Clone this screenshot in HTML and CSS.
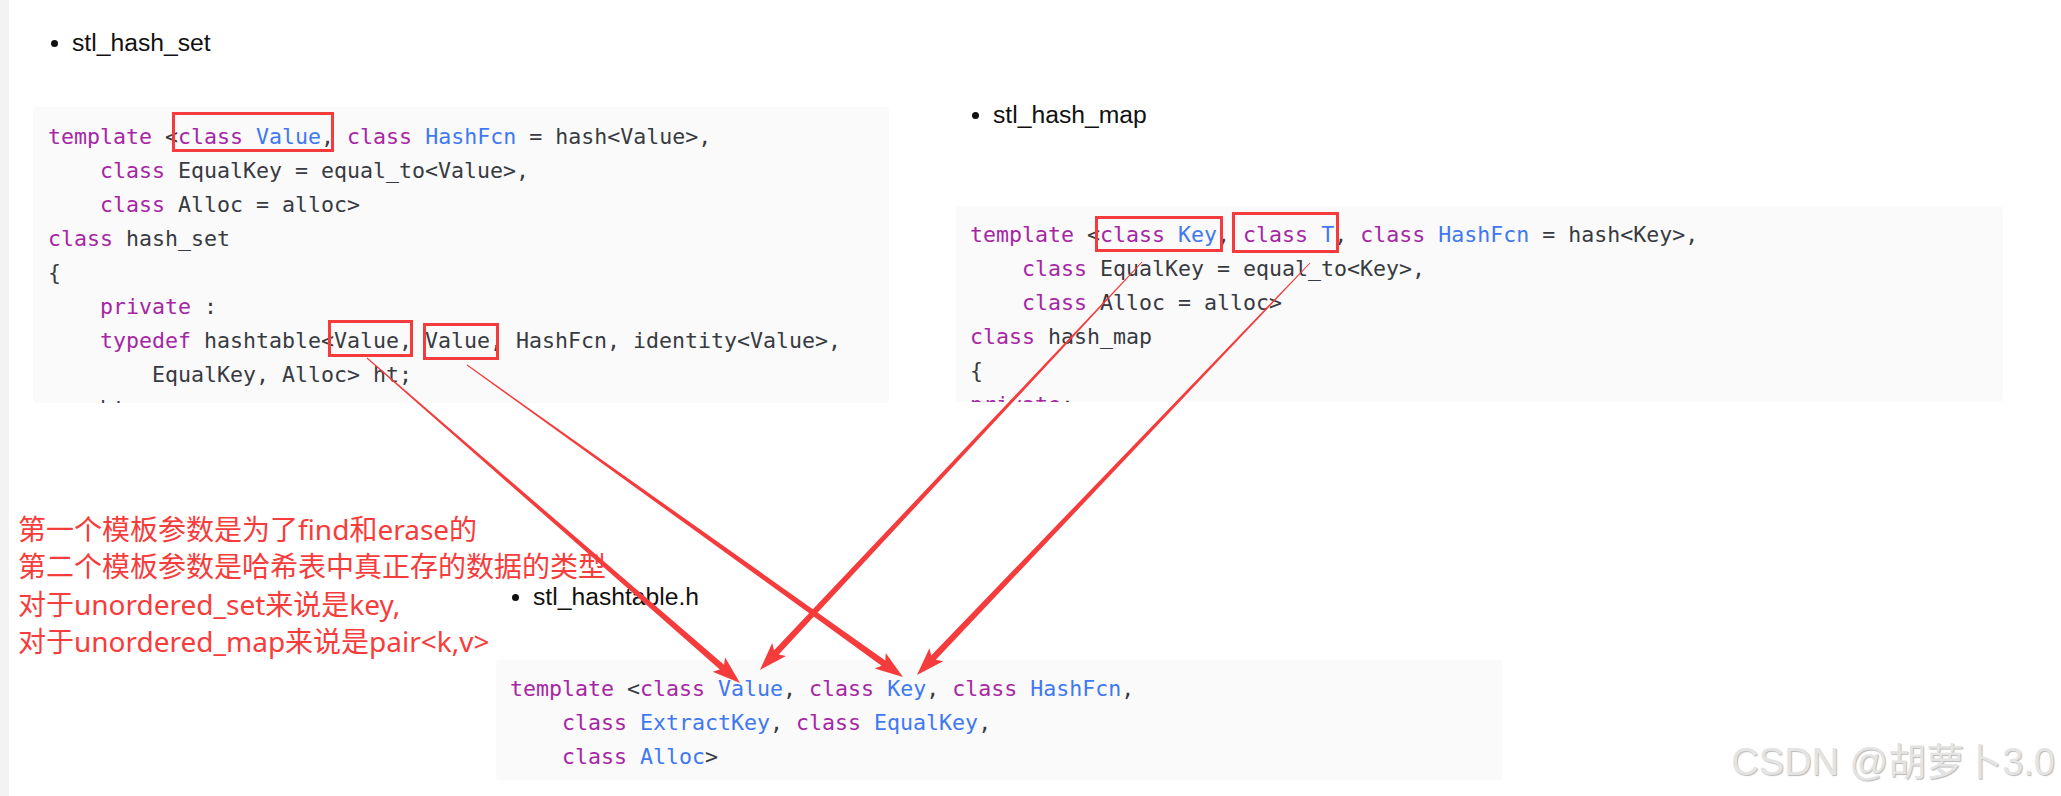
FILE: index.html
```html
<!DOCTYPE html>
<html lang="zh-CN">
<head>
<meta charset="utf-8">
<title>stl hash</title>
<link rel="stylesheet" href="styles.css">
</head>
<body>
<div class="row1">
  <div class="col col1">
    <div class="item"><span class="dot"></span><span>stl_hash_set</span></div>
    <pre class="code code1"><span class="k">template</span> &lt;<span class="k">class</span> <span class="t">Value</span>, <span class="k">class</span> <span class="t">HashFcn</span> = hash&lt;Value&gt;,
    <span class="k">class</span> EqualKey = equal_to&lt;Value&gt;,
    <span class="k">class</span> Alloc = alloc&gt;
<span class="k">class</span> hash_set
{
    <span class="k">private</span> :
    <span class="k">typedef</span> hashtable&lt;Value, Value, HashFcn, identity&lt;Value&gt;,
        EqualKey, Alloc&gt; ht;
    ht rep;</pre>
  </div>
  <div class="col col2">
    <div class="item"><span class="dot"></span><span>stl_hash_map</span></div>
    <pre class="code code2"><span class="k">template</span> &lt;<span class="k">class</span> <span class="t">Key</span>, <span class="k">class</span> <span class="t">T</span>, <span class="k">class</span> <span class="t">HashFcn</span> = hash&lt;Key&gt;,
    <span class="k">class</span> EqualKey = equal_to&lt;Key&gt;,
    <span class="k">class</span> Alloc = alloc&gt;
<span class="k">class</span> hash_map
{
<span class="k">private</span>:</pre>
  </div>
</div>
<div class="sec3">
  <div class="item"><span class="dot"></span><span>stl_hashtable.h</span></div>
  <pre class="code code3"><span class="k">template</span> &lt;<span class="k">class</span> <span class="t">Value</span>, <span class="k">class</span> <span class="t">Key</span>, <span class="k">class</span> <span class="t">HashFcn</span>,
    <span class="k">class</span> <span class="t">ExtractKey</span>, <span class="k">class</span> <span class="t">EqualKey</span>,
    <span class="k">class</span> <span class="t">Alloc</span>&gt;</pre>
</div>

<div class="note">第一个模板参数是为了find和erase的<br>第二个模板参数是哈希表中真正存的数据的类型<br>对于unordered_set来说是key,<br>对于unordered_map来说是pair&lt;k,v&gt;</div>

<svg class="marks" width="2061" height="796" viewBox="0 0 2061 796">
  <g fill="none" stroke="#f53b3b" stroke-width="3">
    <rect x="173.5" y="113.5" width="159" height="37"/>
    <rect x="329.5" y="321.5" width="82" height="34"/>
    <rect x="424.5" y="324.5" width="73" height="34"/>
    <rect x="1096.5" y="217.5" width="125" height="33"/>
    <rect x="1233.5" y="213.5" width="104" height="38"/>
  </g>
  <g fill="#f53b3b">
    <polygon transform="translate(367 358) rotate(41.06)" points="0,-0.5 470.7,-3.2 466.7,-9.5 494.7,0 466.7,9.5 470.7,3.2 0,0.5"/>
    <polygon transform="translate(467 365) rotate(35.59)" points="0,-0.5 512.1,-3.2 508.1,-9.5 536.1,0 508.1,9.5 512.1,3.2 0,0.5"/>
    <polygon transform="translate(1142 262) rotate(133.12)" points="0,-0.5 534.9,-3.2 530.9,-9.5 558.9,0 530.9,9.5 534.9,3.2 0,0.5"/>
    <polygon transform="translate(1310 263) rotate(133.65)" points="0,-0.5 545.4,-3.2 541.4,-9.5 569.4,0 541.4,9.5 545.4,3.2 0,0.5"/>
  </g>
</svg>

<div class="watermark">CSDN @胡萝卜3.0</div>
</body>
</html>
```
FILE: styles.css
```css
* { box-sizing: border-box; }

html, body {
  margin: 0;
  padding: 0;
}

body {
  position: relative;
  width: 2061px;
  height: 796px;
  overflow: hidden;
  background: linear-gradient(to right, #f3f3f3 0, #f3f3f3 9px, #ffffff 9px);
  font-family: "Liberation Sans", Arial, sans-serif;
  color: #111;
}

.row1 {
  display: flex;
  align-items: flex-start;
}

.col1 {
  margin-left: 33px;
  width: 856px;
}

.col2 {
  margin-left: 67px;
  width: 1047px;
}

.item {
  display: flex;
  align-items: center;
  gap: 14px;
  height: 36px;
  font-size: 24.7px;
  line-height: 36px;
  color: #111;
}

.dot {
  width: 7px;
  height: 7px;
  border-radius: 50%;
  background: #111;
  flex: none;
}

.col1 .item {
  margin-top: 25px;
  padding-left: 18px;
}

.col2 .item {
  margin-top: 97px;
  padding-left: 16px;
}

.code {
  margin: 0;
  background: #fafafa;
  border-radius: 4px;
  padding: 12px 14px 0 14px;
  font-family: "DejaVu Sans Mono", monospace;
  font-size: 21.6px;
  line-height: 34px;
  color: #383a42;
  white-space: pre;
  overflow: hidden;
}

.code .k { color: #a626a4; }
.code .t { color: #4078f2; }

.code1 {
  margin-top: 46px;
  height: 296px;
  padding-top: 13px;
  padding-left: 15px;
}

.code2 {
  margin-top: 73px;
  height: 196px;
}

.sec3 {
  margin-left: 496px;
  margin-top: 176px;
  width: 1006px;
}

.sec3 .item {
  padding-left: 16px;
}

.code3 {
  margin-top: 45px;
  height: 120px;
}

.note {
  position: absolute;
  left: 18px;
  top: 511px;
  font-family: "Noto Sans", "Noto Sans CJK SC", sans-serif;
  font-size: 28px;
  line-height: 37.3px;
  color: #f73c3c;
  white-space: nowrap;
}

.marks {
  position: absolute;
  left: 0;
  top: 0;
  pointer-events: none;
}

.watermark {
  position: absolute;
  right: 6px;
  bottom: 12px;
  font-family: "Liberation Sans", "Noto Sans CJK SC", sans-serif;
  font-size: 38px;
  line-height: 44px;
  color: #e4e4e4;
  text-shadow: 1px 1px 1px #b8b8b8;
  white-space: nowrap;
}
```
